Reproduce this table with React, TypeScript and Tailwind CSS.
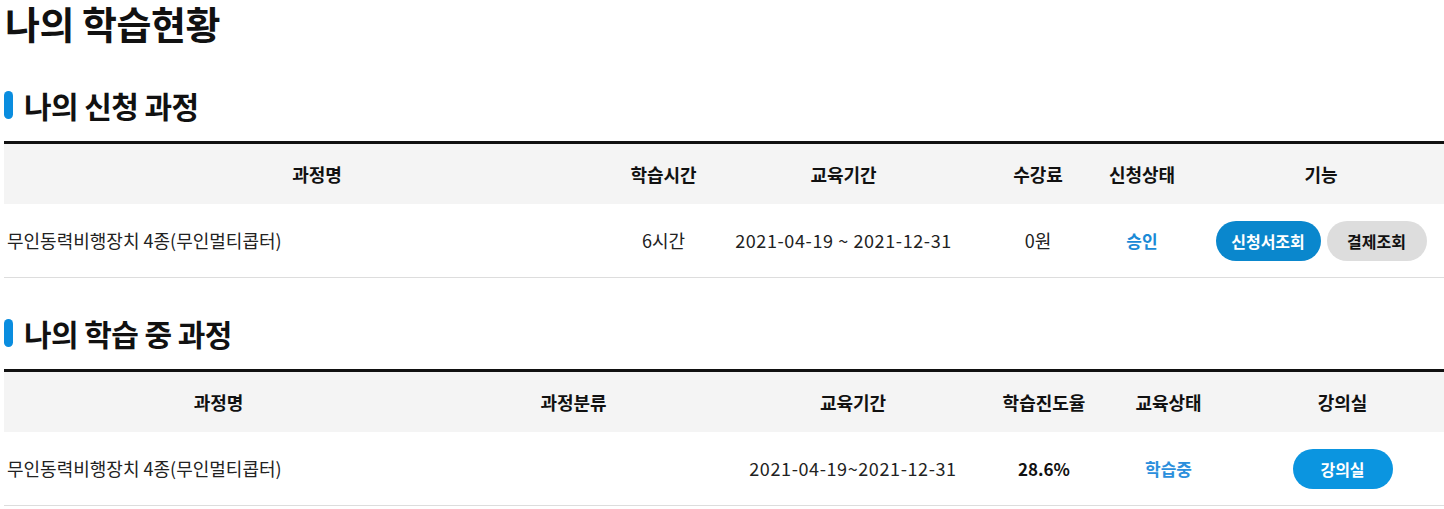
const font = "font-['Noto_Sans_CJK_KR',sans-serif]";

const SectionTitle = ({ children }: { children: string }) => (
  <div className="flex items-center h-[28px] mb-[22px]">
    <span className="w-[9px] h-[28px] rounded-full bg-[#0a8ddf] mr-[11px]"></span>
    <h2 className="text-[30px] font-bold text-[#111] leading-[36px] tracking-[-0.6px]">{children}</h2>
  </div>
);

const Table = ({
  cols,
  head,
  children,
}: {
  cols: string;
  head: string[];
  children: React.ReactNode;
}) => (
  <div className="border-t-[3px] border-[#111] border-b border-b-[#dddddd]">
    <div className={`grid ${cols} h-[60px] bg-[#f4f4f4] items-center`}>
      {head.map((h) => (
        <div key={h} className="text-center text-[18px] font-bold text-[#111]">
          {h}
        </div>
      ))}
    </div>
    <div className={`grid ${cols} h-[73px] items-center text-[18px] text-[#222]`}>{children}</div>
  </div>
);

export default function App() {
  return (
    <div className={`${font} bg-white w-[1444px] h-[509px] overflow-hidden pl-[4px]`}>
      <h1 className="h-[50px] leading-[46px] text-[38px] font-bold text-[#111] pl-[1px] tracking-[-0.5px]">
        나의 학습현황
      </h1>

      <div className="mt-[41px]">
        <SectionTitle>나의 신청 과정</SectionTitle>
        <Table
          cols="grid-cols-[626px_67px_293px_96px_112px_1fr]"
          head={["과정명", "학습시간", "교육기간", "수강료", "신청상태", "기능"]}
        >
          <div className="pl-[3px]">무인동력비행장치 4종(무인멀티콥터)</div>
          <div className="text-center">6시간</div>
          <div className="text-center tracking-[0.6px]">2021-04-19 ~ 2021-12-31</div>
          <div className="text-center">0원</div>
          <div className="text-center font-bold text-[17px] text-[#1a8ad6]">승인</div>
          <div className="flex justify-center gap-[6px]">
            <button className="w-[105px] h-[40px] rounded-full bg-[#0a87cd] text-white font-bold text-[16px]">
              신청서조회
            </button>
            <button className="w-[100px] h-[40px] rounded-full bg-[#dddddd] text-[#111] font-bold text-[16px]">
              결제조회
            </button>
          </div>
        </Table>
      </div>

      <div className="mt-[41px]">
        <SectionTitle>나의 학습 중 과정</SectionTitle>
        <Table
          cols="grid-cols-[429px_281px_278px_104px_145px_1fr]"
          head={["과정명", "과정분류", "교육기간", "학습진도율", "교육상태", "강의실"]}
        >
          <div className="pl-[3px]">무인동력비행장치 4종(무인멀티콥터)</div>
          <div className="text-center"></div>
          <div className="text-center tracking-[0.6px]">2021-04-19~2021-12-31</div>
          <div className="text-center font-bold text-[17px] text-[#111]">28.6%</div>
          <div className="text-center font-bold text-[17px] text-[#2b8fdc]">학습중</div>
          <div className="flex justify-center">
            <button className="w-[100px] h-[40px] rounded-full bg-[#0b95e0] text-white font-bold text-[16px]">
              강의실
            </button>
          </div>
        </Table>
      </div>
    </div>
  );
}
